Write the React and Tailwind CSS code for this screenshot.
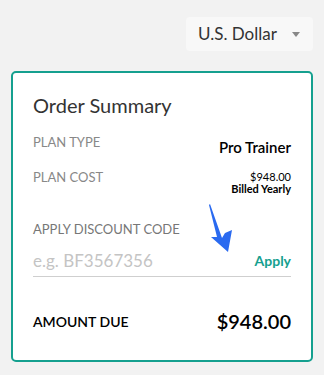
import React from 'react'

function Arrow() {
	return (
		<svg className="absolute left-[-49px] top-[-48px]" width="28" height="52" viewBox="0 0 28 52">
			<path d="M4 2 L16 36 L19 31 L26 28 L22 50 L5 35 L11 35 L3 3 Z" fill="#2a6af0" />
		</svg>
	)
}

export default function App() {
	return (
		<div className="w-[324px] h-[375px] bg-[#f2f2f2] pt-[17px] px-[11px] font-['Lato',sans-serif]">
			<div className="flex justify-end">
				<div className="w-[127px] h-[34px] bg-[#f8f8f8] rounded-[4px] flex items-center justify-between pl-[12px] pr-[13px]">
					<span className="text-[17px] text-[#333]">U.S. Dollar</span>
					<span className="w-0 h-0 border-l-[4px] border-r-[4px] border-t-[5px] border-l-transparent border-r-transparent border-t-[#888]"></span>
				</div>
			</div>
			<div className="mt-[20px] bg-white border-2 border-[#15a08f] rounded-[5px] h-[291px] px-[20px] pt-[18px]">
				<h2 className="text-[20px] text-[#333] leading-[28px]">Order Summary</h2>
				<div className="mt-[14px] flex justify-between items-start">
					<span className="text-[13px] text-[#888] leading-[18px]">PLAN TYPE</span>
					<span className="text-[15px] text-black font-semibold leading-[20px] mt-[4px]">Pro Trainer</span>
				</div>
				<div className="mt-[10px] flex justify-between items-start">
					<span className="text-[13px] text-[#888] leading-[18px] mt-[1px]">PLAN COST</span>
					<div className="text-right text-[11px] leading-[12px] text-black mt-[4px]">
						<div>$948.00</div>
						<div className="font-bold">Billed Yearly</div>
					</div>
				</div>
				<div className="mt-[25px] text-[13px] text-[#777] leading-[18px]">APPLY DISCOUNT CODE</div>
				<div className="relative mt-[12px] flex justify-between items-center border-b border-[#cfcfcf] pb-[4px]">
					<input className="w-[180px] text-[17px] text-[#333] placeholder:text-[#c4c4c4] outline-none bg-transparent leading-[22px]" placeholder="e.g. BF3567356" />
					<div className="relative flex items-center h-[22px]">
						<Arrow />
						<span className="text-[14px] text-[#15a08f] font-bold leading-[18px]">Apply</span>
					</div>
				</div>
				<div className="mt-[29px] flex justify-between items-center">
					<span className="text-[14px] text-black font-semibold">AMOUNT DUE</span>
					<span className="text-[20px] text-black font-semibold">$948.00</span>
				</div>
			</div>
		</div>
	)
}
